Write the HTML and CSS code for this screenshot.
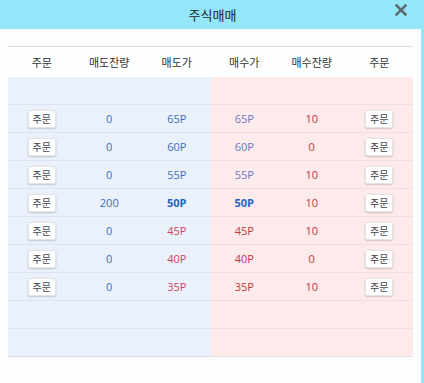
FILE: index.html
```html
<!DOCTYPE html>
<html lang="ko">
<head>
<meta charset="utf-8">
<link rel="stylesheet" href="styles.css">
</head>
<body>
<div class="dialog">
  <div class="titlebar">
    <span class="title">주식매매</span>
    <span class="close" aria-label="닫기">
      <svg width="12" height="12" viewBox="0 0 12 12"><path d="M1.5 1.5 L10.5 10.5 M10.5 1.5 L1.5 10.5" stroke="#5b6b70" stroke-width="2.5" stroke-linecap="square"/></svg>
    </span>
  </div>
  <div class="content">
    <div class="table">
      <div class="row head">
        <div class="c">주문</div><div class="c">매도잔량</div><div class="c">매도가</div><div class="c">매수가</div><div class="c">매수잔량</div><div class="c">주문</div>
      </div>
      <div class="row empty"><div class="sell"></div><div class="buy"></div></div>
      <div class="row"><div class="sell"><div class="c"><button>주문</button></div><div class="c blue">0</div><div class="c blue">65P</div></div><div class="buy"><div class="c lav">65P</div><div class="c red">10</div><div class="c"><button>주문</button></div></div></div>
      <div class="row"><div class="sell"><div class="c"><button>주문</button></div><div class="c blue">0</div><div class="c blue">60P</div></div><div class="buy"><div class="c lav">60P</div><div class="c red">0</div><div class="c"><button>주문</button></div></div></div>
      <div class="row"><div class="sell"><div class="c"><button>주문</button></div><div class="c blue">0</div><div class="c blue">55P</div></div><div class="buy"><div class="c lav">55P</div><div class="c red">10</div><div class="c"><button>주문</button></div></div></div>
      <div class="row"><div class="sell"><div class="c"><button>주문</button></div><div class="c blue">200</div><div class="c cur">50P</div></div><div class="buy"><div class="c cur">50P</div><div class="c red">10</div><div class="c"><button>주문</button></div></div></div>
      <div class="row"><div class="sell"><div class="c"><button>주문</button></div><div class="c blue">0</div><div class="c pinkred">45P</div></div><div class="buy"><div class="c red">45P</div><div class="c red">10</div><div class="c"><button>주문</button></div></div></div>
      <div class="row"><div class="sell"><div class="c"><button>주문</button></div><div class="c blue">0</div><div class="c pinkred">40P</div></div><div class="buy"><div class="c red">40P</div><div class="c red">0</div><div class="c"><button>주문</button></div></div></div>
      <div class="row"><div class="sell"><div class="c"><button>주문</button></div><div class="c blue">0</div><div class="c pinkred">35P</div></div><div class="buy"><div class="c red">35P</div><div class="c red">10</div><div class="c"><button>주문</button></div></div></div>
      <div class="row empty"><div class="sell"></div><div class="buy"></div></div>
      <div class="row empty last"><div class="sell"></div><div class="buy"></div></div>
    </div>
  </div>
</div>
</body>
</html>
```
FILE: styles.css
```css
* { box-sizing: border-box; }
html, body { margin: 0; padding: 0; }
body {
  width: 424px;
  height: 383px;
  overflow: hidden;
  background: #95e6f8;
  font-family: "Open Sans", "Noto Sans CJK KR", sans-serif;
}
.dialog {
  width: 421px;
  height: 383px;
  display: flex;
  flex-direction: column;
}
.titlebar {
  height: 29px;
  position: relative;
  display: flex;
  align-items: center;
  justify-content: center;
  background: #95e6f8;
}
.title {
  font-family: "Noto Sans CJK KR", sans-serif;
  font-size: 13px;
  color: #14282c;
  margin-left: 4px;
  margin-top: -1px;
}
.close {
  position: absolute;
  right: 14px;
  top: 4px;
  width: 12px;
  height: 12px;
  display: flex;
}
.content {
  flex: 1;
  background: #fdfefe;
  padding: 17px 8px 0 8px;
}
.table {
  border-top: 1px solid #dcdfe2;
  width: 405px;
}
.row {
  display: flex;
  height: 28px;
}
.row.head {
  height: 30px;
  background: #fdfefe;
  font-family: "Noto Sans CJK KR", sans-serif;
  font-size: 11px;
  color: #333;
  padding-bottom: 1px;
}
.row.head .c { width: 67.5px; }
.sell, .buy {
  display: flex;
  width: 202.5px;
  height: 100%;
}
.sell { background: #eaf1fb; border-bottom: 1px solid #dde3ec; }
.buy { background: #fdeaea; border-bottom: 1px solid #f2dede; }
.row.last .sell { border-bottom-color: #d9dee6; }
.row.last .buy { border-bottom-color: #ecdcdc; }
.c {
  flex: 1;
  display: flex;
  align-items: center;
  justify-content: center;
  font-size: 11px;
}
.sell .c, .buy .c { width: 67.5px; }
button {
  width: 28px;
  height: 18px;
  padding: 0;
  margin: 0;
  border: 1px solid #e4e4e4;
  border-radius: 2px;
  background: #fff;
  box-shadow: 0 1px 2px rgba(0,0,0,0.18);
  font-family: "Noto Sans CJK KR", sans-serif;
  font-size: 10px;
  color: #444;
  line-height: 16px;
}
.blue { color: #3b6fbf; }
.lav { color: #6f78c6; }
.red { color: #c0393a; }
.pinkred { color: #d0455a; }
.cur { color: #2563c5; font-weight: 700; }
```
